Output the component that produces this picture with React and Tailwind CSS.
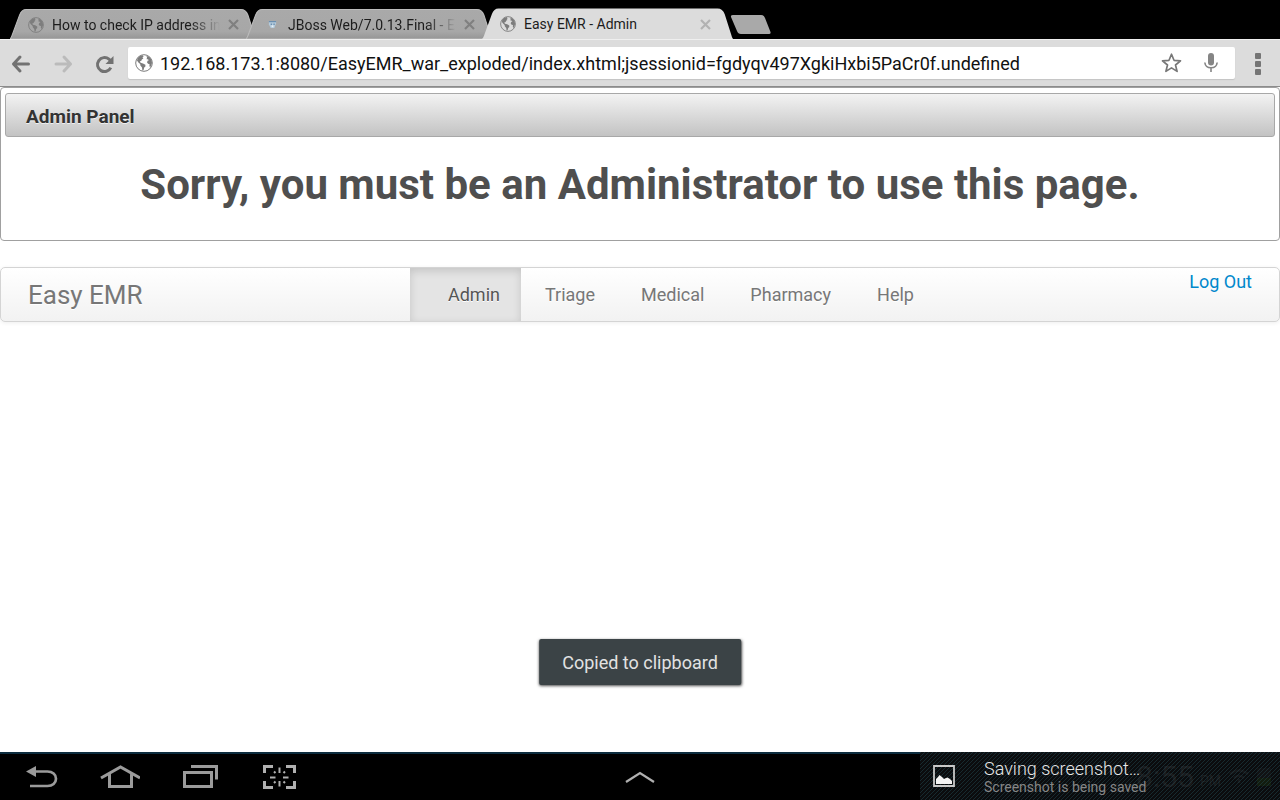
import React from "react";

function Globe({ className }) {
  return (
    <svg className={className} viewBox="0 0 18 18" fill="none" aria-hidden="true">
      <circle cx="9" cy="9" r="8.300" stroke="currentColor" strokeWidth="1" />
      <path
        d="M2.600 4.200 4.600 2.200 7.600 1.200 8.600 2.800 7.400 3.400 8.400 4.600 6.800 5.400 6.400 6.800 4.800 7.400 5.600 8.800 8 9.400 10.400 10.800 10.400 12.400 9.200 13.600 8.600 16 7.400 16.400 7 13.400 5.400 11.600 5.200 10 3.400 8.400 2 6.400Z"
        fill="currentColor"
      />
      <path d="M11.400 1.800 14.400 3 16.400 5.600 17 9 16 12 15 13.400 14.400 11.800 14.600 10.200 13 9.800 12 8.200 12.800 6.600 14 6.200 12.800 5.200 11.600 5.200 12 3.600Z" fill="currentColor" />
    </svg>
  );
}

function Shield({ className }) {
  return (
    <svg className={className} viewBox="0 0 10 10" aria-hidden="true">
      <path d="M1 1h8v3L7 9H3L1 5Z" fill="#b4cbdc" />
      <path d="M1 1h8v1.500H1ZM3 4h1.500v1.500H3ZM6 4h1.500v1.500H6Z" fill="#6b8fb0" />
      <path d="M4 6h2v2H4Z" fill="#e8f0f5" />
    </svg>
  );
}

function Tab({ icon, title, active, className }) {
  return (
    <div
      className={
        "relative flex items-center pt-px pl-[17px] " +
        (active ? "z-10 h-[31px] w-[251px] pr-[19px] " : "h-[30px] w-[246px] pr-[14px] ") +
        className
      }
    >
      <svg className="absolute inset-0 h-full w-full" viewBox="0 0 243 30" preserveAspectRatio="none" aria-hidden="true">
        <defs>
          <linearGradient id="tabFill" x1="0" y1="0" x2="0" y2="1">
            <stop offset="0" stopColor="#a9a9a9" />
            <stop offset="0.75" stopColor="#a7a7a7" />
            <stop offset="1" stopColor="#969696" />
          </linearGradient>
        </defs>
        <path
          d="M0 30 C1 29 1.500 28 2 26.500 L9.500 6 Q11.500 .5 16 .5 H228 Q233 .5 235 6 L241 25 Q242 29 243 30Z"
          fill={active ? "#dcdcdc" : "url(#tabFill)"}
          stroke={active ? "#e6e6e6" : "#bcbcbc"}
          strokeWidth={active ? "0" : "1"}
        />
      </svg>
      <span className="relative flex w-[18px] shrink-0 justify-center text-[#7d7d7d]">{icon}</span>
      <button
        className={
          "relative ml-[7px] flex-1 overflow-hidden text-left text-[14px] leading-5 whitespace-nowrap text-[#1c1c1c] " +
          (active ? "" : "[mask-image:linear-gradient(to_right,black_82%,transparent)]")
        }
      >
        {title}
      </button>
      <button aria-label={"Close " + title} className="relative ml-1 flex size-[18px] shrink-0 items-center justify-center">
        <svg className="size-[11px]" viewBox="0 0 11 11" aria-hidden="true">
          <path d="m1 1 9 9m0-9-9 9" stroke={active ? "#b2b2b2" : "#808080"} strokeWidth="2.200" />
        </svg>
      </button>
    </div>
  );
}

function TabStrip() {
  return (
    <nav aria-label="Browser tabs" className="flex h-[39px] shrink-0 items-end bg-black pl-[10px]">
      <Tab icon={<Globe className="size-4" />} title="How to check IP address in" className="" />
      <Tab icon={<Shield className="size-[9px]" />} title="JBoss Web/7.0.13.Final - E" className="-ml-[10px]" />
      <Tab icon={<Globe className="size-4" />} title="Easy EMR - Admin" active className="-ml-[10px]" />
      <button aria-label="New tab" className="mb-[5px] ml-[-3px] h-[19px] w-[41px]">
        <svg className="h-full w-full" viewBox="0 0 41 19" aria-hidden="true">
          <path d="M3 0H31Q34 0 35 3L40.500 17Q41 19 39 19H11Q8 19 7 16L1 2Q.500 0 3 0Z" fill="#a9a9a9" />
        </svg>
      </button>
    </nav>
  );
}

function Toolbar() {
  return (
    <header className="flex h-12 shrink-0 items-center border-t border-b border-t-[#efefef] border-b-[#8c8c8c] bg-[#dcdcdc] pr-4 pl-[11px]">
      <button aria-label="Back" className="flex w-5 justify-center pt-px">
        <svg className="h-5 w-5" viewBox="0 0 20 20" fill="none" stroke="#727272" strokeWidth="3" aria-hidden="true">
          <path d="M17.500 10H3M9 3 2.500 10 9 17" strokeLinejoin="round" strokeLinecap="round" />
        </svg>
      </button>
      <button aria-label="Forward" className="ml-[22px] flex w-5 justify-center pt-px">
        <svg className="h-5 w-5" viewBox="0 0 20 20" fill="none" stroke="#bbbbbb" strokeWidth="3" aria-hidden="true">
          <path d="M3 10h14.500M11 3 17.500 10 11 17" strokeLinejoin="round" strokeLinecap="round" />
        </svg>
      </button>
      <button aria-label="Reload" className="ml-[22px] flex w-5 justify-center pt-px">
        <svg className="h-5 w-5" viewBox="0 0 20 20" fill="none" aria-hidden="true">
          <path d="M15.800 13.600A7 7 0 1 1 14 5.200L16 7" stroke="#727272" strokeWidth="3" />
          <path d="M18.500 2v8h-8Z" fill="#727272" />
        </svg>
      </button>
      <div className="ml-[13px] flex h-8 flex-1 items-center rounded-[2px] bg-white pr-4 pl-[7px] shadow-[0_1px_1px_#c4c4c4]">
        <Globe className="size-[18px] shrink-0 text-[#7c7c7c]" />
        <input
          aria-label="Address"
          className="ml-[7px] min-w-0 flex-1 bg-transparent pt-[2px] text-[18px] leading-6 text-[#111] outline-none"
          defaultValue="192.168.173.1:8080/EasyEMR_war_exploded/index.xhtml;jsessionid=fgdyqv497XgkiHxbi5PaCr0f.undefined"
        />
        <button aria-label="Bookmark" className="flex shrink-0">
          <svg className="size-[22px]" viewBox="0 0 22 22" fill="none" stroke="#777" strokeWidth="1.700" strokeLinejoin="round" aria-hidden="true">
            <path d="m10.500 2.200 2.500 6.100 6.500.5-5 4.200 1.600 6.400-5.600-3.500-5.600 3.500L6.500 13l-5-4.200 6.500-.5Z" />
          </svg>
        </button>
        <button aria-label="Voice search" className="ml-5 flex shrink-0">
          <svg className="h-5 w-4" viewBox="0 0 16 20" aria-hidden="true">
            <rect x="5" y="0" width="6" height="12.500" rx="3" fill="#858585" />
            <path d="M1.800 9.500c.4 3.300 3 5.300 6.200 5.300s5.800-2 6.200-5.300M8 15v4" stroke="#858585" strokeWidth="1.600" fill="none" />
          </svg>
        </button>
      </div>
      <button aria-label="Menu" className="ml-[17px] flex w-3 flex-col items-center gap-[2px] pt-[2px]">
        <span className="size-[6px] rounded-[1px] bg-[#757575]" />
        <span className="size-[6px] rounded-[1px] bg-[#757575]" />
        <span className="size-[6px] rounded-[1px] bg-[#757575]" />
      </button>
    </header>
  );
}

function NavLink({ children, active }) {
  return (
    <a
      href="#"
      aria-current={active ? "page" : undefined}
      className={
        "flex items-center text-[18px] leading-6 [text-shadow:0_1px_0_#fff] " +
        (active
          ? "mr-px bg-[#e4e4e4] pr-[21px] pl-[38px] text-[#555] shadow-[inset_0_3px_8px_rgba(0,0,0,0.14)]"
          : "px-[23px] text-[#777]")
      }
    >
      {children}
    </a>
  );
}

function Page() {
  return (
    <main className="relative flex-1 bg-white">
      <section className="rounded-[4px] border border-[#a0a0a0] p-1 pt-[5px]">
        <h2 className="rounded-[3px] border border-[#a8a8a8] bg-linear-to-b from-[#f3f3f3] to-[#c3c3c3] px-5 pt-[10px] pb-[7px] text-[19px] leading-[25px] font-bold text-[#333] [text-shadow:0_1px_0_rgba(255,255,255,0.7)]">
          Admin Panel
        </h2>
        <h1 className="pt-[20px] pb-[23px] text-center text-[42px] leading-[56px] font-bold text-[#4f4f4f]">
          Sorry, you must be an Administrator to use this page.
        </h1>
      </section>
      <nav
        aria-label="Easy EMR"
        className="mt-[26px] flex h-[55px] items-stretch rounded-[5px] border border-[#d4d4d4] bg-linear-to-b from-white to-[#f2f2f2] shadow-[0_1px_4px_rgba(0,0,0,0.07)]"
      >
        <a href="#" className="flex w-[32%] items-center pl-[27px] text-[26px] leading-8 text-[#777] [text-shadow:0_1px_0_#fff]">
          Easy EMR
        </a>
        <NavLink active>Admin</NavLink>
        <NavLink>Triage</NavLink>
        <NavLink>Medical</NavLink>
        <NavLink>Pharmacy</NavLink>
        <NavLink>Help</NavLink>
        <a href="#" className="mr-[27px] ml-auto pt-[2px] text-[18px] leading-6 text-[#0088cc]">
          Log Out
        </a>
      </nav>
      <div
        role="status"
        className="absolute bottom-[67px] left-1/2 flex h-[46px] -translate-x-1/2 items-center rounded-[2px] bg-[#3b4346] px-[23px] text-[18px] whitespace-nowrap text-[#e2e2e2] shadow-[0_1px_3px_rgba(0,0,0,0.7)]"
      >
        Copied to clipboard
      </div>
    </main>
  );
}

function SystemBar() {
  return (
    <footer className="relative grid h-12 shrink-0 grid-cols-[1fr_auto_1fr] items-center border-t-2 border-[#0c2c3e] bg-black">
      <div className="flex items-center gap-10 pl-[26px]">
        <button aria-label="Back" className="pt-px">
          <svg className="h-6 w-8" viewBox="0 0 32 24" aria-hidden="true">
            <path d="M8 5.500H21.500C26.500 5.500 30 8.500 30 12.700S26.500 20 21.500 20H4" stroke="#9b9b9b" strokeWidth="2.700" fill="none" />
            <path d="M0 5.500 10 0v11Z" fill="#9b9b9b" />
          </svg>
        </button>
        <button aria-label="Home" className="ml-[2px]">
          <svg className="h-6 w-10" viewBox="0 0 40 24" fill="none" stroke="#9b9b9b" strokeWidth="3" aria-hidden="true">
            <path d="M1 13 20.500 2 40 13M9.500 8.500v13h22v-13" />
          </svg>
        </button>
        <button aria-label="Recent apps" className="ml-[2px]">
          <svg className="h-6 w-9" viewBox="0 0 36 24" fill="none" stroke="#9b9b9b" strokeWidth="3" aria-hidden="true">
            <path d="M2.500 7.500h27v14h-27ZM9 1.500h25.500V14.500" />
          </svg>
        </button>
        <button aria-label="Capture screen" className="ml-1">
          <svg className="h-6 w-[34px]" viewBox="0 0 34 24" fill="none" stroke="#b0b0b0" aria-hidden="true">
            <path d="M2.500 8V1.500H11M24 1.500h8.500V8M32.500 16v6.500H24M11 22.500H2.500V16" strokeWidth="3" />
            <path d="M17.500 2.500V8M17.500 16v5.500M8 12.500h5.500M21 12.500H26.500M12 6.500l1.500 1.500M23 6.500 21.500 8M12 18l1.500-1.500M23 18l-1.500-1.500" strokeWidth="2" />
          </svg>
        </button>
      </div>
      <button aria-label="Show mini apps">
        <svg className="h-3 w-[30px]" viewBox="0 0 30 12" fill="none" stroke="#b0b0b0" strokeWidth="2.200" aria-hidden="true">
          <path d="m1 11 14-9 14 9" />
        </svg>
      </button>
      <div className="flex items-center justify-end pr-[9px] text-[#808080]">
        <span className="text-[30px] leading-8">8:55</span>
        <span className="ml-[6px] pt-2 text-[14px]">PM</span>
        <svg className="ml-2 h-4 w-5" viewBox="0 0 20 16" fill="none" stroke="#606060" strokeWidth="2.500" aria-hidden="true">
          <path d="M1 5Q10-2 19 5M5 9Q10 4.500 15 9M10 10v4" />
        </svg>
        <span className="ml-2 flex h-[18px] w-[14px] flex-col justify-end bg-[#333]">
          <span className="h-2 bg-[#3f8000]" />
        </span>
      </div>
      <div
        role="alert"
        className="absolute -top-[2px] right-0 bottom-0 flex w-[360px] items-center bg-[#0c0e10]/88 bg-[linear-gradient(135deg,rgba(36,72,80,0.5)_12.5%,transparent_12.5%,transparent_50%,rgba(36,72,80,0.5)_50%,rgba(36,72,80,0.5)_62.5%,transparent_62.5%)] bg-[length:4px_4px] pl-[13px]"
      >
        <svg className="size-[22px] shrink-0" viewBox="0 0 22 22" aria-hidden="true">
          <path d="M1 1h20v20H1Z" fill="none" stroke="#c8c8c8" strokeWidth="1.800" />
          <path d="M3 19v-5l2-2 1.500-2L9 12l2 2 2-1 1.500-.5L17 14l2 2v3Z" fill="#f4f4f4" />
        </svg>
        <div className="pt-[2px] pl-[29px]">
          <p className="text-[18px] leading-5 font-light text-[#e6e6e6]">Saving screenshot…</p>
          <p className="text-[14px] leading-4 text-[#868686]">Screenshot is being saved</p>
        </div>
      </div>
    </footer>
  );
}

export default function App() {
  return (
    <div className="flex min-h-screen flex-col bg-white font-[Roboto,'Liberation_Sans',sans-serif]">
      <TabStrip />
      <Toolbar />
      <Page />
      <SystemBar />
    </div>
  );
}
